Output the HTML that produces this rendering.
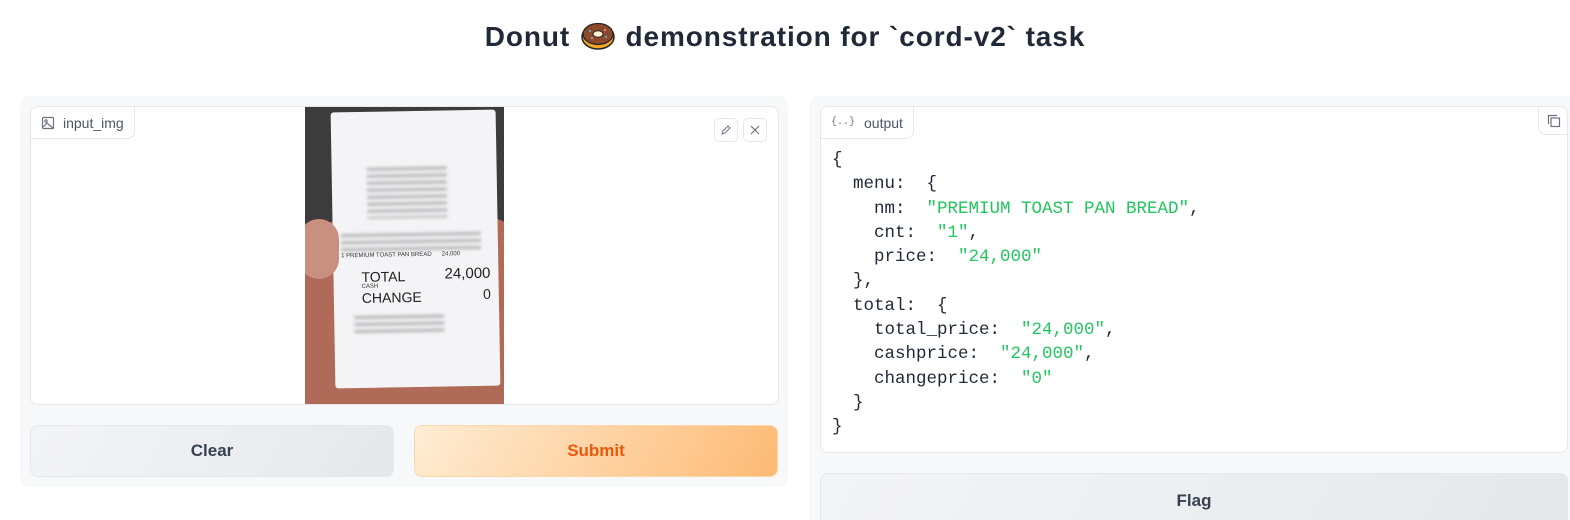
<!DOCTYPE html>
<html><head><meta charset="utf-8"><style>
*{box-sizing:border-box;margin:0;padding:0}
html,body{width:1570px;height:520px;overflow:hidden}
body{background:#fff;font-family:"Liberation Sans",sans-serif;position:relative}
h1{position:absolute;top:20px;left:0;width:1570px;text-align:center;font-size:28px;font-weight:bold;color:#1f2937;letter-spacing:0.9px}
.donut{display:inline-block;width:34px;height:30px;vertical-align:-4px;margin:0 2px}
.panel{position:absolute;background:#f7f8fa;border-radius:10px}
.box{position:absolute;background:#fff;border:1px solid #e5e7eb;border-radius:8px;overflow:hidden}
.label{position:absolute;top:0;left:0;height:32px;padding:0 10px 0 10px;border-right:1px solid #e5e7eb;border-bottom:1px solid #e5e7eb;border-bottom-right-radius:8px;font-size:14px;color:#4b5563;display:flex;align-items:center;gap:8px;background:#fff}
.btn{position:absolute;border-radius:8px;display:flex;align-items:center;justify-content:center;font-size:17px;font-weight:bold}
.iconbtn{position:absolute;top:11px;width:24px;height:24px;border:1px solid #e5e7eb;border-radius:5px;display:flex;align-items:center;justify-content:center;background:#fff}
pre{position:absolute;left:11px;top:41px;font-family:"Liberation Mono","DejaVu Sans Mono",monospace;font-size:17.5px;line-height:24.3px;color:#1f2937}
.s{color:#22c55e}
</style></head><body>
<h1>Donut <svg class="donut" viewBox="0 0 34 30"><ellipse cx="17" cy="17" rx="16" ry="12" fill="#f5a623" stroke="#222" stroke-width="1.5"/><ellipse cx="17" cy="14" rx="15" ry="10.5" fill="#8b4a2b" stroke="#222" stroke-width="1.2"/><ellipse cx="17" cy="14" rx="5" ry="3.2" fill="#fff3d0" stroke="#222" stroke-width="1"/><circle cx="9" cy="11" r="1" fill="#4fc3f7"/><circle cx="24" cy="10" r="1" fill="#f48fb1"/><circle cx="11" cy="18" r="1" fill="#f48fb1"/><circle cx="25" cy="17" r="1" fill="#4fc3f7"/></svg> demonstration for `cord-v2` task</h1>

<div class="panel" style="left:20px;top:96px;width:768px;height:391px"></div>
<div class="box" style="left:30px;top:106px;width:749px;height:299px">
  <div class="label"><svg width="14" height="14" viewBox="0 0 14 14" fill="none" stroke="#6b7280" stroke-width="1.2"><rect x="1.5" y="1.5" width="11" height="11" rx="1"/><circle cx="5" cy="5" r="1.2"/><path d="M2 11l4-4 6 5"/></svg>input_img</div>
  <div style="position:absolute;left:274px;top:0;width:199px;height:298px;background:#3d3b3c;overflow:hidden">
    <div style="position:absolute;left:-10px;top:110px;width:230px;height:220px;background:#b06a58;border-radius:60px 40px 0 0"></div>
    <div style="position:absolute;left:28px;top:4px;width:165px;height:276px;background:#f4f3f5;border-radius:3px;transform:rotate(-1deg)">
      <div style="position:absolute;left:35px;top:52px;width:80px;height:55px;background:repeating-linear-gradient(#f4f3f5 0 4px,#9a9a9a 4px 7px);filter:blur(1.5px);opacity:.7"></div>
      <div style="position:absolute;left:8px;top:118px;width:140px;height:22px;background:repeating-linear-gradient(#f4f3f5 0 4px,#999 4px 7px);filter:blur(1.5px);opacity:.7"></div>
      <div style="position:absolute;left:8px;top:141px;font-size:6px;color:#333;white-space:nowrap">1 PREMIUM TOAST PAN BREAD &nbsp;&nbsp;&nbsp;&nbsp; 24,000</div>
      <div style="position:absolute;left:28px;top:157px;font-size:14px;color:#222">TOTAL</div>
      <div style="position:absolute;right:8px;top:155px;font-size:15px;color:#222">24,000</div>
      <div style="position:absolute;left:28px;top:172px;font-size:6px;color:#333">CASH</div>
      <div style="position:absolute;left:28px;top:178px;font-size:14px;color:#222">CHANGE</div>
      <div style="position:absolute;right:8px;top:176px;font-size:14px;color:#222">0</div>
      <div style="position:absolute;left:20px;top:200px;width:90px;height:24px;background:repeating-linear-gradient(#f4f3f5 0 4px,#999 4px 7px);filter:blur(1.5px);opacity:.7"></div>
    </div>
    <div style="position:absolute;left:-6px;top:112px;width:40px;height:60px;background:#c9907f;border-radius:20px"></div>
  </div>
  <div class="iconbtn" style="left:683px"><svg width="12" height="12" viewBox="0 0 12 12" fill="none" stroke="#6b7280" stroke-width="1"><path d="M2 10l1-3 5-5 2 2-5 5z"/></svg></div>
  <div class="iconbtn" style="left:712px"><svg width="12" height="12" viewBox="0 0 12 12" stroke="#6b7280" stroke-width="1.2"><path d="M2 2l8 8M10 2l-8 8"/></svg></div>
</div>
<div class="btn" style="left:30px;top:425px;width:364px;height:52px;background:linear-gradient(120deg,#f3f4f6,#e5e7eb);border:1px solid #e5e7eb;color:#374151">Clear</div>
<div class="btn" style="left:414px;top:425px;width:364px;height:52px;background:linear-gradient(120deg,#ffedd5,#fdba74);border:1px solid #fed7aa;color:#ea580c">Submit</div>

<div class="panel" style="left:809px;top:96px;width:780px;height:440px"></div>
<div class="box" style="left:820px;top:106px;width:748px;height:347px">
  <div class="label" style="gap:9px"><span style="font-family:'Liberation Mono',monospace;font-size:10px;color:#6b7280">{..}</span>output</div>
  <div style="position:absolute;left:717px;top:0;width:30px;height:28px;border-left:1px solid #e5e7eb;border-bottom:1px solid #e5e7eb;border-bottom-left-radius:8px;display:flex;align-items:center;justify-content:center"><svg width="14" height="14" viewBox="0 0 14 14" fill="none" stroke="#6b7280" stroke-width="1.2"><path d="M1.5 10V1.5H10"/><rect x="4" y="4" width="8.5" height="8.5"/></svg></div>
<pre>{
  menu:  {
    nm:  <span class="s">"PREMIUM TOAST PAN BREAD"</span>,
    cnt:  <span class="s">"1"</span>,
    price:  <span class="s">"24,000"</span>
  },
  total:  {
    total_price:  <span class="s">"24,000"</span>,
    cashprice:  <span class="s">"24,000"</span>,
    changeprice:  <span class="s">"0"</span>
  }
}</pre>
</div>
<div class="btn" style="left:820px;top:473px;width:748px;height:56px;background:linear-gradient(120deg,#f3f4f6,#e5e7eb);border:1px solid #e5e7eb;color:#374151">Flag</div>
</body></html>
